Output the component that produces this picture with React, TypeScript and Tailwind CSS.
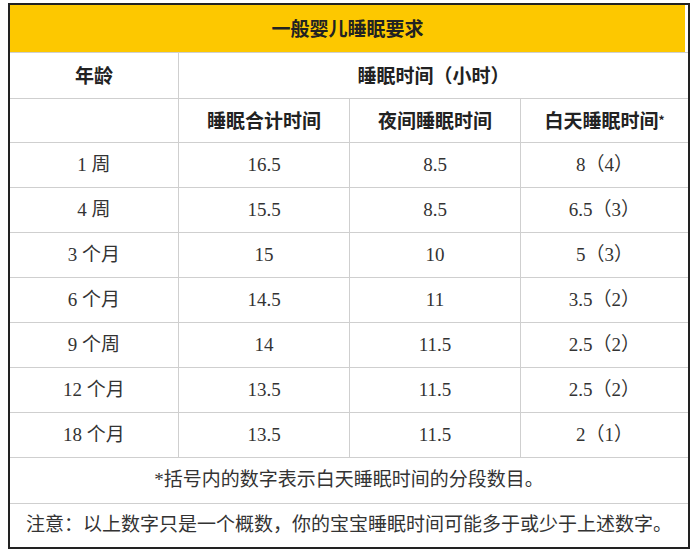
import React from "react";

const font = { fontFamily: '"Liberation Serif", "Noto Sans CJK SC", serif' };

const rows: [string, string, string, string][] = [
  ["1 周", "16.5", "8.5", "8（4）"],
  ["4 周", "15.5", "8.5", "6.5（3）"],
  ["3 个月", "15", "10", "5（3）"],
  ["6 个月", "14.5", "11", "3.5（2）"],
  ["9 个周", "14", "11.5", "2.5（2）"],
  ["12 个月", "13.5", "11.5", "2.5（2）"],
  ["18 个月", "13.5", "11.5", "2（1）"],
];

export default function App() {
  return (
    <div className="w-[700px] h-[554px] bg-white pt-[3px] pl-[8px]">
      <div
        className="w-[682px] border-2 border-[#222] flex flex-col text-[19px] text-[#333]"
        style={font}
      >
        <div className="h-[47px] bg-[#fdc800] border-r-[3px] border-white flex items-center justify-center font-bold text-[#222] [font-family:'Noto_Sans_CJK_SC',sans-serif]">
          一般婴儿睡眠要求
        </div>
        <div className="h-[46px] border-t border-[#cfcfcf] grid grid-cols-[168px_1fr] font-bold text-[#222] [font-family:'Noto_Sans_CJK_SC',sans-serif]">
          <div className="flex items-center justify-center">年龄</div>
          <div className="flex items-center justify-center border-l border-[#cfcfcf]">
            睡眠时间（小时）
          </div>
        </div>
        <div className="h-[44px] border-t border-[#cfcfcf] grid grid-cols-[168px_171px_171px_1fr] font-bold text-[#222] [font-family:'Noto_Sans_CJK_SC',sans-serif]">
          <div></div>
          <div className="flex items-center justify-center border-l border-[#cfcfcf]">睡眠合计时间</div>
          <div className="flex items-center justify-center border-l border-[#cfcfcf]">夜间睡眠时间</div>
          <div className="flex items-center justify-center border-l border-[#cfcfcf]">
            白天睡眠时间<span className="text-[12px] self-start mt-[12px]">*</span>
          </div>
        </div>
        {rows.map((r, i) => (
          <div
            key={i}
            className="h-[45px] border-t border-[#cfcfcf] grid grid-cols-[168px_171px_171px_1fr]"
          >
            <div className="flex items-center justify-center">{r[0]}</div>
            <div className="flex items-center justify-center border-l border-[#cfcfcf]">{r[1]}</div>
            <div className="flex items-center justify-center border-l border-[#cfcfcf]">{r[2]}</div>
            <div className="flex items-center justify-center border-l border-[#cfcfcf]">{r[3]}</div>
          </div>
        ))}
        <div className="h-[46px] border-t border-[#cfcfcf] flex items-center justify-center">
          *括号内的数字表示白天睡眠时间的分段数目。
        </div>
        <div className="h-[44px] border-t border-[#cfcfcf] flex items-center justify-center">
          注意：以上数字只是一个概数，你的宝宝睡眠时间可能多于或少于上述数字。
        </div>
      </div>
    </div>
  );
}
